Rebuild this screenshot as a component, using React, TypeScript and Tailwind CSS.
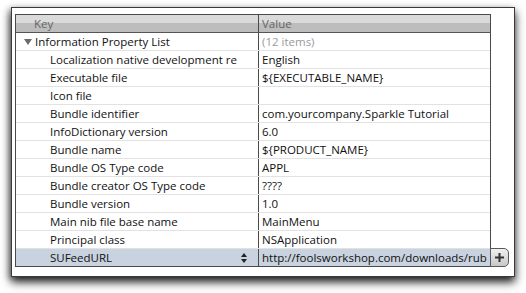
import React from "react";

const rows: [string, string][] = [
  ["Localization native development re", "English"],
  ["Executable file", "${EXECUTABLE_NAME}"],
  ["Icon file", ""],
  ["Bundle identifier", "com.yourcompany.Sparkle Tutorial"],
  ["InfoDictionary version", "6.0"],
  ["Bundle name", "${PRODUCT_NAME}"],
  ["Bundle OS Type code", "APPL"],
  ["Bundle creator OS Type code", "????"],
  ["Bundle version", "1.0"],
  ["Main nib file base name", "MainMenu"],
  ["Principal class", "NSApplication"],
];

export default function App() {
  return (
    <div
      className="w-[526px] h-[293px] bg-white pt-[7px] pl-[11px] overflow-hidden text-[11.5px] text-[#111]"
      style={{ fontFamily: '"Open Sans", "DejaVu Sans", sans-serif' }}
    >
      <div className="w-[504px] h-[270px] border border-[#3a3a3a] bg-white shadow-[0_5px_9px_rgba(0,0,0,0.85),-2px_2px_6px_rgba(0,0,0,0.3)] pt-[6px] pl-[3px] flex items-end pb-[9px]">
        <div className="w-[476px] border border-[#4a4a4a] flex flex-col">
          <div className="flex h-[18px] border-b border-[#555] bg-[linear-gradient(#dadada_0%,#dadada_50%,#bdbdbd_50%,#bdbdbd_100%)] text-[#666]">
            <div className="w-[243px] border-r border-[#4a4a4a] pl-[18px] leading-[17px]">Key</div>
            <div className="flex-1 pl-[3px] leading-[17px]">Value</div>
          </div>
          <div className="flex h-[18px] border-b border-[#e2e2e2]">
            <div className="w-[243px] border-r border-[#4a4a4a] pl-[8px] flex items-center gap-[2px] leading-[17px]">
              <svg width="9" height="8" viewBox="0 0 9 8" className="mt-[1px]">
                <polygon points="0,1 8,1 4,7" fill="#6b6b6b" />
              </svg>
              <span>Information Property List</span>
            </div>
            <div className="flex-1 pl-[3px] leading-[17px] text-[#9a9a9a]">(12 items)</div>
          </div>
          {rows.map(([k, v]) => (
            <div key={k} className="flex h-[18px] border-b border-[#e2e2e2]">
              <div className="w-[243px] border-r border-[#4a4a4a] pl-[34px] leading-[17px] whitespace-nowrap overflow-hidden">{k}</div>
              <div className="flex-1 pl-[3px] leading-[17px] whitespace-nowrap overflow-hidden">{v}</div>
            </div>
          ))}
          <div className="flex h-[17px] bg-[#c9d2df]">
            <div className="w-[243px] border-r border-[#4a4a4a] pl-[34px] leading-[17px] flex items-center justify-between pr-[11px]">
              <span>SUFeedURL</span>
              <svg width="6" height="10" viewBox="0 0 6 10">
                <polygon points="3,0 6,4 0,4" fill="#222" />
                <polygon points="0,6 6,6 3,10" fill="#222" />
              </svg>
            </div>
            <div className="flex-1 pl-[3px] leading-[17px] whitespace-nowrap overflow-hidden">http://foolsworkshop.com/downloads/rub</div>
          </div>
        </div>
        <div className="w-[19px] h-[19px] -ml-[1px] border border-[#5a5a5a] rounded-r-[5px] bg-[linear-gradient(#f0f0f0,#c8c8c8)] flex items-center justify-center">
          <svg width="9" height="9" viewBox="0 0 9 9">
            <rect x="3.5" y="0" width="2" height="9" fill="#333" />
            <rect x="0" y="3.5" width="9" height="2" fill="#333" />
          </svg>
        </div>
      </div>
    </div>
  );
}
